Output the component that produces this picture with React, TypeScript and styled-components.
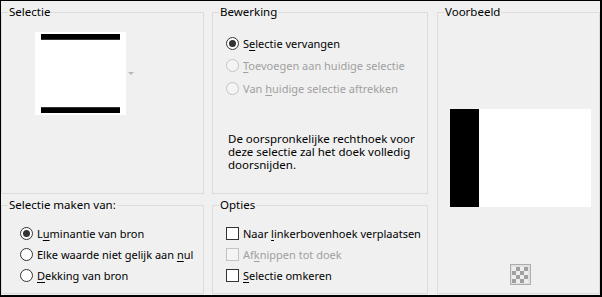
import React from "react"
import { styled, createGlobalStyle } from "styled-components"

const GlobalStyle = createGlobalStyle`
  html, body {
    margin: 0;
    padding: 0;
    background: #f0f0f0;
  }
  body {
    font-family: "Segoe UI", "Noto Sans", "Liberation Sans", sans-serif;
    font-size: 11px;
    color: #000;
  }
`

const Dialog = styled.div`
  box-sizing: border-box;
  width: 602px;
  height: 297px;
  border-style: solid;
  border-color: #000;
  border-width: 1px 2px 2px 1px;
  background: #f0f0f0;
  display: grid;
  grid-template-columns: 203px 216px 1fr;
  grid-template-rows: 190px 97px;
  column-gap: 8px;
  row-gap: 3px;
  padding-top: 3px;
  overflow: hidden;
`

const Group = styled.fieldset<{ $span?: boolean; $shift?: number }>`
  margin: 0 0 0 ${(p) => p.$shift || 0}px;
  padding: 0;
  min-width: 0;
  border: 1px solid #dcdcdc;
  display: flex;
  flex-direction: column;
  ${(p) => (p.$span ? "grid-row: 1 / span 2; grid-column: 3;" : "")}
`

const Legend = styled.legend`
  margin-left: 6px;
  padding: 0 1px;
  line-height: 16px;
  font-size: 11.5px;
`

const Options = styled.div<{ $left: number; $top: number; $row: number }>`
  display: flex;
  flex-direction: column;
  padding-left: ${(p) => p.$left}px;
  margin-top: ${(p) => p.$top}px;
  & > * {
    height: ${(p) => p.$row}px;
  }
`

const Row = styled.label<{ $disabled?: boolean }>`
  display: flex;
  align-items: center;
  gap: 4px;
  white-space: nowrap;
  color: ${(p) => (p.$disabled ? "#a0a0a0" : "#000")};
`

const Key = styled.span`
  text-decoration: underline;
  text-underline-offset: 2px;
`

const RadioDot = styled.span<{ $checked?: boolean; $disabled?: boolean }>`
  box-sizing: border-box;
  width: 13px;
  height: 13px;
  border-radius: 50%;
  border: 1px solid ${(p) => (p.$disabled ? "#c4c4c4" : "#333")};
  background: ${(p) => (p.$disabled ? "#f4f4f4" : "#fff")};
  display: flex;
  align-items: center;
  justify-content: center;
  flex: none;
  &::after {
    content: "";
    width: 7px;
    height: 7px;
    border-radius: 50%;
    background: #333;
    display: ${(p) => (p.$checked ? "block" : "none")};
  }
`

const CheckBox = styled.span<{ $disabled?: boolean }>`
  box-sizing: border-box;
  width: 13px;
  height: 13px;
  border: 1px solid ${(p) => (p.$disabled ? "#c4c4c4" : "#333")};
  background: ${(p) => (p.$disabled ? "#f4f4f4" : "#fff")};
  flex: none;
`

const SourceRow = styled.div`
  display: flex;
  align-items: center;
  gap: 2px;
  margin: 12px 0 0 33px;
`

const SourceThumb = styled.div`
  box-sizing: border-box;
  width: 91px;
  height: 83px;
  background: #fff;
  padding: 2px 6px;
  display: flex;
  flex-direction: column;
  justify-content: space-between;
`

const Bar = styled.div<{ $edge: "top" | "bottom" }>`
  height: 5px;
  background: #000;
  border-${(p) => (p.$edge === "top" ? "bottom" : "top")}: 1px solid #333;
`

const DropArrow = styled.span`
  width: 0;
  height: 0;
  border-left: 3px solid transparent;
  border-right: 3px solid transparent;
  border-top: 3px solid #b8b8b8;
`

const Note = styled.p`
  margin: 32px 0 0 15px;
  line-height: 13px;
  font-size: 11.5px;
`

const PreviewArea = styled.div`
  flex: 1;
  display: flex;
  flex-direction: column;
  align-items: center;
  padding-top: 31px;
`

const PreviewFrame = styled.div`
  flex: 1;
  display: flex;
  align-items: center;
  justify-content: center;
  padding-left: 3px;
`

const PreviewImage = styled.div`
  width: 141px;
  height: 98px;
  background: #fff;
  display: flex;
  &::before {
    content: "";
    width: 29px;
    background: #000;
  }
`

const ChessButton = styled.button`
  box-sizing: border-box;
  width: 21px;
  height: 21px;
  margin: 0 0 8px 3px;
  padding: 0;
  border: 1px solid #adadad;
  background: #e1e1e1;
  display: flex;
  align-items: center;
  justify-content: center;
`

const Chess = styled.span`
  width: 16px;
  height: 16px;
  background-color: #eeeeee;
  background-image: conic-gradient(#a0a0a0 25%, transparent 0 50%, #a0a0a0 0 75%, transparent 0);
  background-size: 8px 8px;
`

type Opt = { pre: string; key: string; post: string; checked?: boolean; disabled?: boolean }

const Label = ({ o }: { o: Opt }) => (
  <span>
    {o.pre}
    <Key>{o.key}</Key>
    {o.post}
  </span>
)

const modeOpts: Opt[] = [
  { pre: "S", key: "e", post: "lectie vervangen", checked: true },
  { pre: "", key: "T", post: "oevoegen aan huidige selectie", disabled: true },
  { pre: "Van ", key: "h", post: "uidige selectie aftrekken", disabled: true },
]

const sourceOpts: Opt[] = [
  { pre: "L", key: "u", post: "minantie van bron", checked: true },
  { pre: "Elke waarde niet gelijk aan ", key: "n", post: "ul" },
  { pre: "", key: "D", post: "ekking van bron" },
]

const extraOpts: Opt[] = [
  { pre: "Naar ", key: "l", post: "inkerbovenhoek verplaatsen" },
  { pre: "Af", key: "k", post: "nippen tot doek", disabled: true },
  { pre: "", key: "S", post: "electie omkeren" },
]

export default function App() {
  return (
    <>
      <GlobalStyle />
      <Dialog>
        <Group>
          <Legend>Selectie</Legend>
          <SourceRow>
            <SourceThumb>
              <Bar $edge="top" />
              <Bar $edge="bottom" />
            </SourceThumb>
            <DropArrow />
          </SourceRow>
        </Group>

        <Group>
          <Legend>Bewerking</Legend>
          <Options $left={13} $top={12} $row={22.5}>
            {modeOpts.map((o) => (
              <Row key={o.post} $disabled={o.disabled}>
                <RadioDot $checked={o.checked} $disabled={o.disabled} />
                <Label o={o} />
              </Row>
            ))}
          </Options>
          <Note>
            De oorspronkelijke rechthoek voor
            <br />
            deze selectie zal het doek volledig
            <br />
            doorsnijden.
          </Note>
        </Group>

        <Group $span $shift={1}>
          <Legend>Voorbeeld</Legend>
          <PreviewArea>
            <PreviewFrame>
              <PreviewImage />
            </PreviewFrame>
            <ChessButton>
              <Chess />
            </ChessButton>
          </PreviewArea>
        </Group>

        <Group>
          <Legend>Selectie maken van:</Legend>
          <Options $left={18} $top={10} $row={21}>
            {sourceOpts.map((o) => (
              <Row key={o.post}>
                <RadioDot $checked={o.checked} />
                <Label o={o} />
              </Row>
            ))}
          </Options>
        </Group>

        <Group>
          <Legend>Opties</Legend>
          <Options $left={13} $top={10} $row={21}>
            {extraOpts.map((o) => (
              <Row key={o.post} $disabled={o.disabled}>
                <CheckBox $disabled={o.disabled} />
                <Label o={o} />
              </Row>
            ))}
          </Options>
        </Group>
      </Dialog>
    </>
  )
}
